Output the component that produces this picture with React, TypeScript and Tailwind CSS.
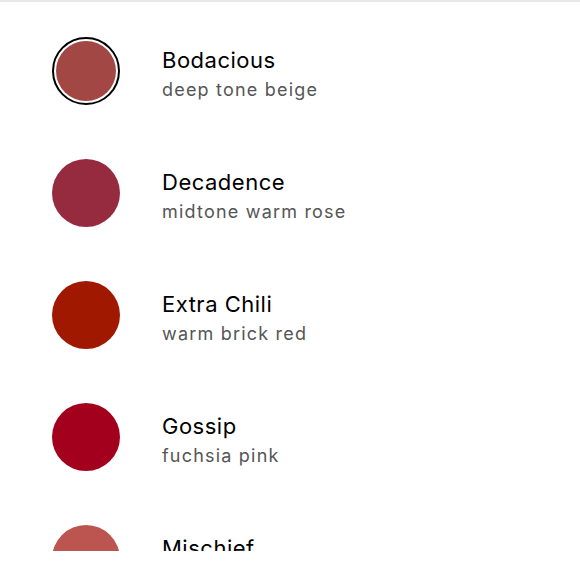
const shades = [
  { name: "Bodacious", note: "deep tone beige", color: "bg-[#a34744]", selected: true },
  { name: "Decadence", note: "midtone warm rose", color: "bg-[#962a3f]" },
  { name: "Extra Chili", note: "warm brick red", color: "bg-[#a01800]" },
  { name: "Gossip", note: "fuchsia pink", color: "bg-[#a3001e]" },
  { name: "Mischief", note: "cool mauve", color: "bg-[#bc5450]" },
];

export default function App() {
  return (
    <main className="min-h-screen bg-white font-['Inter',sans-serif] text-black">
      <div className="h-[551px] overflow-hidden border-t-2 border-[#e8e8e8]">
        <ul className="flex flex-col gap-[54px] pl-[52px] pt-[35px]">
          {shades.map((s) => (
            <li key={s.name} className="flex items-center gap-[42px]">
              <div
                className={
                  s.selected
                    ? "flex h-[68px] w-[68px] shrink-0 items-center justify-center rounded-full border-2 border-black bg-white"
                    : "h-[68px] w-[68px] shrink-0 rounded-full"
                }
              >
                {s.selected ? (
                  <div className={`h-[60px] w-[60px] rounded-full ${s.color}`} />
                ) : null}
                {!s.selected ? <div className={`h-full w-full rounded-full ${s.color}`} /> : null}
              </div>
              <div className="flex flex-col pt-[8px]">
                <span className="text-[22px] leading-[29px] tracking-[0.5px]">{s.name}</span>
                <span className="text-[18px] leading-[30px] tracking-[1.2px] text-[#555555]">{s.note}</span>
              </div>
            </li>
          ))}
        </ul>
      </div>
    </main>
  );
}
